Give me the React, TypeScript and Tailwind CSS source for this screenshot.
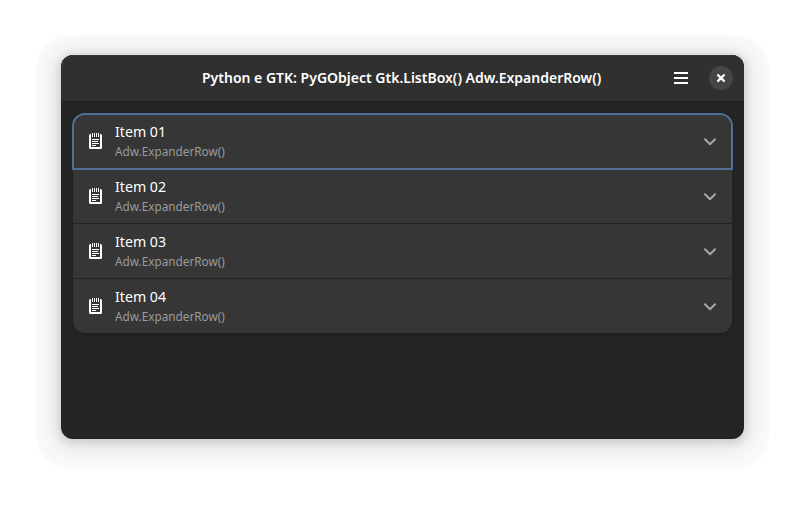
import React from "react";

const items = ["Item 01", "Item 02", "Item 03", "Item 04"];

function NotepadIcon() {
  return (
    <svg width="13" height="16" viewBox="0 0 13 16" className="shrink-0">
      <path
        fill="#fff"
        fillRule="evenodd"
        d="M1.5 1H2V4H11V1H11.5A1.5 1.5 0 0 1 13 2.5V14.5A1.5 1.5 0 0 1 11.5 16H1.5A1.5 1.5 0 0 1 0 14.5V2.5A1.5 1.5 0 0 1 1.5 1ZM2 4V14H11V4Z"
      />
      <path stroke="#fff" strokeWidth="1" d="M3.5 0V4M5.5 0V4M7.5 0V4M9.5 0V4M3 6.5H10M3 8.5H9M3 10.5H10M3 12.5H7" />
    </svg>
  );
}

function Row({ title, focused }: { title: string; focused: boolean }) {
  return (
    <li
      className={
        "flex h-[55px] shrink-0 items-center border-b border-[#232323] px-4 last:border-transparent " +
        (focused ? "rounded-t-xl outline-2 -outline-offset-1 outline-[#4f6f98]" : "")
      }
    >
      <NotepadIcon />
      <div className="ml-[13px] flex-1 whitespace-nowrap">
        <div className="h-5 origin-left scale-x-[.945] text-[15px] leading-[18px] text-white">{title}</div>
        <div className="h-[18px] origin-left scale-x-[.98] text-[12px] leading-[19px] text-[#9b9b9b]">Adw.ExpanderRow()</div>
      </div>
      <svg className="mt-px" width="12" height="8" viewBox="0 0 12 8" fill="none" stroke="#a7a7a7" strokeWidth="2" strokeLinecap="round" strokeLinejoin="round">
        <path d="M1 1.2 6 6.2 11 1.2" />
      </svg>
    </li>
  );
}

export default function App() {
  return (
    <div className="h-[506px] w-[805px] bg-white pl-[61px] pt-[55px] font-['Noto_Sans',sans-serif]">
      <div className="h-[384px] w-[683px] overflow-hidden rounded-xl bg-[#242424] shadow-[0_2px_8px_2px_rgba(0,0,0,0.13),0_3px_20px_10px_rgba(0,0,0,0.07),0_5px_0_25px_rgba(0,0,0,0.02)]">
        <header className="flex h-[47px] items-center border-b border-[#222] bg-[#303030] shadow-[inset_0_1px_#373737]">
          <h1 className="mb-0.5 ml-[141px] w-[400px] origin-left scale-x-[.955] whitespace-nowrap text-[14.67px] font-semibold text-white">
            Python e GTK: PyGObject Gtk.ListBox() Adw.ExpanderRow()
          </h1>
          <button className="ml-[72px]">
            <svg width="14" height="12" viewBox="0 0 14 12" fill="#fff">
              <path d="M0 0H14V2H0ZM0 5H14V7H0ZM0 10H14V12H0Z" />
            </svg>
          </button>
          <button className="ml-[21px] flex size-6 items-center justify-center rounded-full bg-[#454545]">
            <svg width="8" height="8" viewBox="0 0 8 8" stroke="#fff" strokeWidth="2.2" strokeLinecap="round">
              <path d="M1.1 1.1 6.9 6.9M6.9 1.1 1.1 6.9" />
            </svg>
          </button>
        </header>
        <ul className="mx-3 mt-3 h-[219px] rounded-xl bg-[#363636] shadow-[0_1px_3px_1px_rgba(0,0,0,0.15)]">
          {items.map((title, i) => (
            <Row key={title} title={title} focused={i === 0} />
          ))}
        </ul>
      </div>
    </div>
  );
}
